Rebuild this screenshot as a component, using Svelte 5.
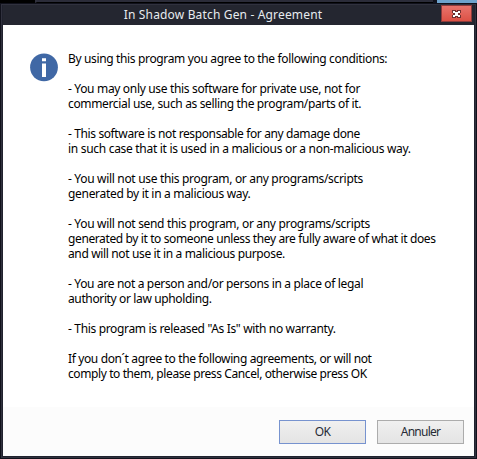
<script>
  // Each entry: [text, letter spacing in px]
  const lines = [
    ['By using this program you agree to the following conditions:', -0.35],
    ['', 0],
    ['- You may only use this software for private use, not for', -0.33],
    ['commercial use, such as selling the program/parts of it.', -0.35],
    ['', 0],
    ['- This software is not responsable for any damage done', -0.38],
    ['in such case that it is used in a malicious or a non-malicious way.', -0.3],
    ['', 0],
    ['- You will not use this program, or any programs/scripts', -0.32],
    ['generated by it in a malicious way.', -0.31],
    ['', 0],
    ['- You will not send this program, or any programs/scripts', -0.32],
    ['generated by it to someone unless they are fully aware of what it does', -0.385],
    ['and will not use it in a malicious purpose.', -0.36],
    ['', 0],
    ['- You are not a person and/or persons in a place of legal', -0.34],
    ['authority or law upholding.', -0.37],
    ['', 0],
    ['- This program is released "As Is" with no warranty.', -0.34],
    ['', 0],
    ['If you don´t agree to the following agreements, or will not', -0.37],
    ['comply to them, please press Cancel, otherwise press OK', -0.4]
  ];
</script>

<div class="desktop">
  <div class="backdrop"><i class="black"></i><i class="bar"><b></b><b class="second"></b></i><i class="blue"></i></div>
  <div class="window">
    <header>
      <h1>In Shadow Batch Gen - Agreement</h1>
      <button class="close" aria-label="Close">
        <svg width="9" height="8" viewBox="0 0 9 8" shape-rendering="crispEdges">
          <path d="M0 0H4V1H5V0H9V3H8V5H9V8H5V7H4V8H0V5H1V3H0Z" fill="#6e302f" />
          <path d="M1 1H3V2H6V1H8V3H6V5H8V7H6V6H3V7H1V5H3V3H1Z" fill="#fff" />
        </svg>
      </button>
    </header>
    <main>
      <svg class="info" width="28" height="29" viewBox="0 0 28 29">
        <circle cx="14" cy="14.3" r="13.9" fill="#4068a5" />
        <path d="M12 5.3h4v3h-4zM12 10.5h4V24h-4z" fill="#fff" />
      </svg>
      <div class="message">
        {#each lines as [text, spacing]}
          <p style="letter-spacing: {spacing}px">{text}</p>
        {/each}
      </div>
    </main>
    <footer>
      <button class="action primary">OK</button>
      <button class="action">Annuler</button>
    </footer>
  </div>
</div>

<style>
  :global(body) { margin: 0; }
  .desktop {
    box-sizing: border-box;
    width: 477px;
    height: 459px;
    overflow: hidden;
    display: flex;
    flex-direction: column;
    background: #10111b;
    font-family: "Noto Sans", sans-serif;
  }
  .backdrop { height: 4px; flex: none; display: flex; background: #10111b; }
  .backdrop i { display: block; height: 3px; }
  .black { width: 35px; background: #000; }
  .bar {
    width: 398px;
    box-sizing: border-box;
    border-left: 2px solid #30313e;
    border-bottom: 1px solid #000;
    background: #2b2c39;
    display: flex;
    align-items: flex-end;
  }
  .bar b { width: 4px; height: 1px; margin: 0 0 -1px 181px; background: #f00; }
  .bar .second { margin-left: 29px; }
  .blue { margin-left: 4px; width: 40px; background: #6ea3cd; }
  .window {
    box-sizing: border-box;
    flex: 1;
    margin: 0 1px 1px;
    display: flex;
    flex-direction: column;
    border: 1px solid #30313e;
    box-shadow: inset 0 0 0 1px #20222e;
    padding: 0 1px 1px;
  }
  header {
    height: 20px;
    flex: none;
    display: flex;
    align-items: flex-start;
    background: #242630;
    position: relative;
    justify-content: center;
  }
  h1 {
    margin: 0;
    padding-right: 31px;
    font-size: 12px;
    line-height: 19px;
    font-weight: 400;
    letter-spacing: 0.16px;
    color: #e7ebef;
    white-space: nowrap;
  }
  .close {
    position: absolute;
    right: 2px;
    top: 0;
    width: 31px;
    height: 17px;
    padding: 0;
    border: 1px solid #8c3b3c;
    background: linear-gradient(#e8746c, #dc5145);
    display: flex;
    align-items: center;
    justify-content: center;
  }
  main {
    flex: 1;
    display: flex;
    align-items: flex-start;
    background: #fff;
    padding: 26px 0 0 27px;
  }
  .info { flex: none; margin-top: 2px; }
  .message { margin-left: 10px; color: #000; font-size: 12px; line-height: 15px; }
  p { margin: 0; height: 15px; white-space: pre; }
  footer {
    height: 49px;
    flex: none;
    box-sizing: border-box;
    display: flex;
    justify-content: flex-end;
    gap: 11px;
    padding: 13px 10px 0 0;
    background: #fcfcfc;
  }
  .action {
    box-sizing: border-box;
    width: 87px;
    height: 24px;
    padding: 0;
    border: 1px solid #acacac;
    background: linear-gradient(#f0f0f0, #e4e4e4);
    font: 12px/20px "Noto Sans", sans-serif;
    letter-spacing: -0.75px;
    color: #262b35;
  }
  .primary { border-color: #7793cf; }
</style>
